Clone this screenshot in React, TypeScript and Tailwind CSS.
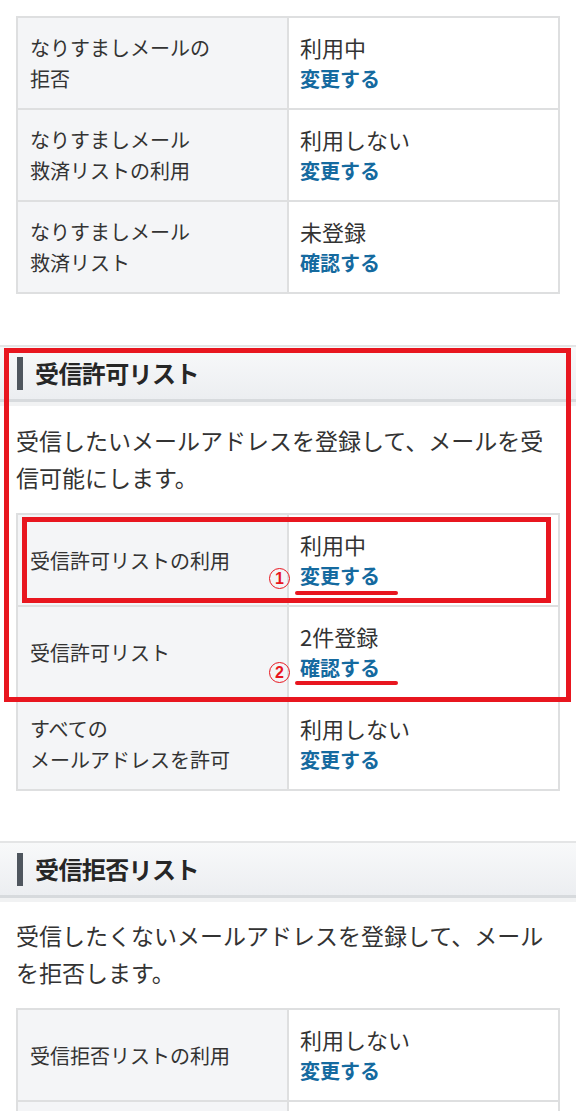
import React from 'react';

type Row = {
  label: string[];
  value: string;
  action: string;
};

const SPOOF_ROWS: Row[] = [
  { label: ['なりすましメールの', '拒否'], value: '利用中', action: '変更する' },
  { label: ['なりすましメール', '救済リストの利用'], value: '利用しない', action: '変更する' },
  { label: ['なりすましメール', '救済リスト'], value: '未登録', action: '確認する' },
];

const ALLOW_ROWS: Row[] = [
  { label: ['受信許可リストの利用'], value: '利用中', action: '変更する' },
  { label: ['受信許可リスト'], value: '2件登録', action: '確認する' },
  { label: ['すべての', 'メールアドレスを許可'], value: '利用しない', action: '変更する' },
];

const DENY_ROWS: Row[] = [
  { label: ['受信拒否リストの利用'], value: '利用しない', action: '変更する' },
];

function SettingTable({
  rows,
  className = '',
  trailingEmpty = false,
}: {
  rows: Row[];
  className?: string;
  trailingEmpty?: boolean;
}) {
  return (
    <div className={`mx-4 w-[544px] border-t-2 border-l-2 border-[#dedfe0] ${className}`}>
      {rows.map((row, i) => (
        <div key={i} className="grid grid-cols-[271px_1fr]">
          <div className="h-[92px] flex flex-col justify-center border-r-2 border-b-2 border-[#dedfe0] bg-[#f4f5f7] pl-3 text-[20px] leading-[31px] text-[#333]">
            {row.label.map((l) => (
              <span key={l}>{l}</span>
            ))}
          </div>
          <div className="h-[92px] flex flex-col justify-center border-r-2 border-b-2 border-[#dedfe0] bg-white pl-[11px]">
            <span className="text-[22px] leading-[32px] text-[#333]">{row.value}</span>
            <a href="#" className="text-[20px] leading-[32px] font-bold text-[#156a9f]">
              {row.action}
            </a>
          </div>
        </div>
      ))}
      {trailingEmpty && (
        <div className="grid grid-cols-[271px_1fr]">
          <div className="h-[92px] border-r-2 border-[#dedfe0] bg-[#f4f5f7]" />
          <div className="h-[92px] border-r-2 border-[#dedfe0] bg-white" />
        </div>
      )}
    </div>
  );
}

function SectionHeader({ title, className = '' }: { title: string; className?: string }) {
  return (
    <div className={className}>
      <div className="border-t-2 border-b-[3px] border-t-[#e4e5e6] border-b-[#d7dadd] bg-gradient-to-b from-[#f8f9fa] to-[#eceef1]">
        <div className="h-[52px] flex items-center gap-3 pl-[17px]">
          <span className="block w-[6px] h-[33px] bg-[#4f565e]" />
          <h2 className="text-[24px] font-bold text-[#262626] tracking-tight">{title}</h2>
        </div>
      </div>
      <div className="h-[4px] bg-[#f1f2f3]" />
    </div>
  );
}

function Marker({ n, className }: { n: string; className: string }) {
  return (
    <span
      className={`absolute w-[21px] h-[21px] rounded-full border-[1.5px] border-[#e8161f] flex items-center justify-center text-[16px] leading-none font-bold text-[#e8161f] font-['Liberation_Sans',sans-serif] ${className}`}
    >
      {n}
    </span>
  );
}

export default function App() {
  return (
    <div className="relative w-[576px] h-[1111px] bg-white pt-4 font-['Noto_Sans_CJK_JP','Noto_Sans',sans-serif] overflow-hidden">
      <SettingTable rows={SPOOF_ROWS} />

      {/* 受信許可リスト */}
      <SectionHeader title="受信許可リスト" className="mt-[51px]" />
      <p className="mt-4 px-4 text-[23px] leading-[37px] text-[#333]">
        受信したいメールアドレスを登録して、メールを受信可能にします。
      </p>
      <SettingTable rows={ALLOW_ROWS} className="mt-[17px]" />

      {/* 受信拒否リスト */}
      <SectionHeader title="受信拒否リスト" className="mt-[50px]" />
      <p className="mt-[15px] px-4 text-[23px] leading-[37px] text-[#333]">
        受信したくないメールアドレスを登録して、メールを拒否します。
      </p>
      <SettingTable rows={DENY_ROWS} className="mt-[17px]" trailingEmpty />

      {/* red annotations */}
      <div className="absolute left-[4px] top-[348px] w-[567px] h-[354px] border-[5px] border-[#e8161f] pointer-events-none" />
      <div className="absolute left-[22px] top-[517px] w-[529px] h-[86px] border-[5px] border-[#e8161f] pointer-events-none" />
      <Marker n="1" className="left-[269px] top-[568px]" />
      <div className="absolute left-[295px] top-[591px] w-[103px] h-[4px] rounded-full bg-[#e8161f]" />
      <Marker n="2" className="left-[269px] top-[662px]" />
      <div className="absolute left-[295px] top-[681px] w-[103px] h-[4px] rounded-full bg-[#e8161f]" />
    </div>
  );
}
